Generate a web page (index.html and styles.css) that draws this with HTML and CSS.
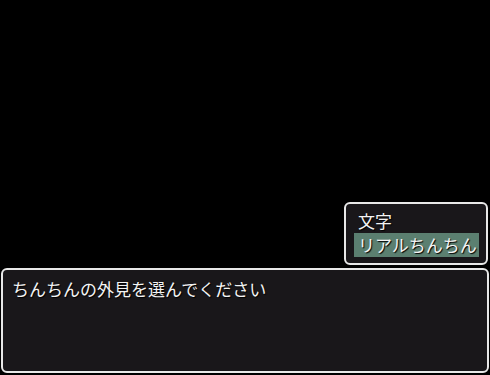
FILE: index.html
```html
<!DOCTYPE html>
<html lang="ja">
<head>
    <meta charset="UTF-8">
    <meta name="viewport" content="width=device-width, initial-scale=1.0">
    <title>ちんちん</title>
    <link rel="stylesheet" href="styles.css">
</head>
<body>
    <div class="screen">
        <div class="choice-window">
            <div class="choice">文字</div>
            <div class="choice selected">リアルちんちん</div>
        </div>
        <div class="message-window">
            <p class="message">ちんちんの外見を選んでください</p>
        </div>
    </div>
</body>
</html>
```

FILE: styles.css
```css
* {
    margin: 0;
    padding: 0;
    box-sizing: border-box;
}

body {
    background-color: #000;
    font-family: "Noto Sans CJK JP", "Noto Sans", sans-serif;
    color: #f4f4f4;
}

.screen {
    width: 490px;
    height: 375px;
    display: flex;
    flex-direction: column;
    justify-content: flex-end;
    padding: 0 1px 2px 1px;
}

.choice-window {
    align-self: flex-end;
    width: 144px;
    margin-right: 1px;
    margin-bottom: 3px;
    padding: 5px 7px 6px 8px;
    background-color: #19171a;
    border: 2px solid #e8e8e8;
    border-radius: 6px;
}

.choice {
    font-size: 17px;
    line-height: 24px;
    padding-left: 4px;
    text-shadow: 1px 1px 1px #000;
}

.choice.selected {
    background-color: #5b7f70;
}

.message-window {
    height: 105px;
    padding: 7px 9px;
    background-color: #19171a;
    border: 2px solid #e8e8e8;
    border-radius: 6px;
}

.message {
    font-size: 17px;
    line-height: 24px;
    text-shadow: 1px 1px 1px #000;
}
```
